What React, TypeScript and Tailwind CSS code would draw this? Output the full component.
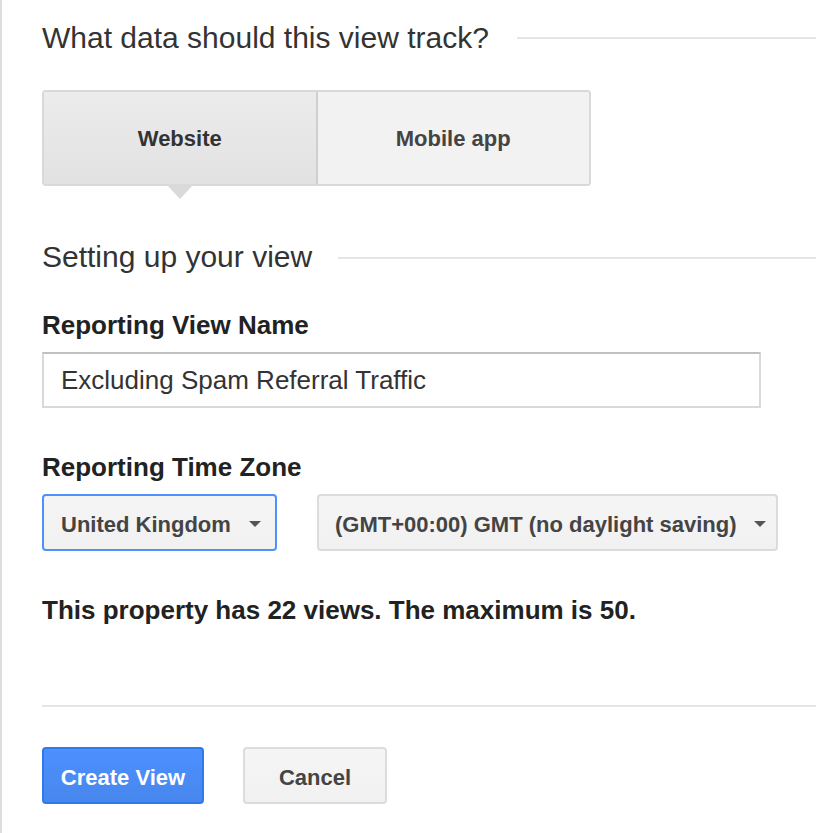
import React from "react";

function Arrow() {
  return (
    <span className="block mt-[3px] w-0 h-0 border-l-[6px] border-r-[6px] border-t-[6px] border-l-transparent border-r-transparent border-t-[#555]" />
  );
}

export default function App() {
  return (
    <div
      className="min-h-screen bg-white border-l-2 border-[#dddddd] pl-[40px] text-[#333]"
      style={{ fontFamily: '"Liberation Sans", Arial, sans-serif' }}
    >
      <div className="pt-[23px] flex flex-col">
        {/* Heading 1 */}
        <div className="flex items-center">
          <h2 className="text-[30px] leading-[30px] font-normal text-[#333] whitespace-nowrap">
            What data should this view track?
          </h2>
          <div className="flex-1 h-[2px] bg-[#e5e5e5] ml-[28px] mt-[0px]" />
        </div>

        {/* Tabs */}
        <div className="mt-[37px] flex w-[549px] h-[96px] rounded-[4px] border-2 border-[#d9d9d9]">
          <div className="relative flex-1 flex items-center justify-center bg-gradient-to-b from-[#ececec] to-[#e2e2e2] border-r-2 border-[#cfcfcf] rounded-l-[2px]">
            <span className="text-[22px] font-bold text-[#333]">Website</span>
            <span className="absolute left-1/2 top-full -translate-x-1/2 w-0 h-0 border-l-[14px] border-r-[14px] border-t-[15px] border-l-transparent border-r-transparent border-t-[#dadada]" />
          </div>
          <div className="flex-1 flex items-center justify-center bg-[#f2f2f2] rounded-r-[2px]">
            <span className="text-[22px] font-bold text-[#444]">Mobile app</span>
          </div>
        </div>

        {/* Heading 2 */}
        <div className="mt-[56px] flex items-center">
          <h2 className="text-[30px] leading-[30px] font-normal text-[#333] whitespace-nowrap">
            Setting up your view
          </h2>
          <div className="flex-1 h-[2px] bg-[#e5e5e5] ml-[26px] mt-[1px]" />
        </div>

        <label className="mt-[40px] text-[26px] leading-[26px] font-bold text-[#222]">
          Reporting View Name
        </label>
        <div className="mt-[14px] w-[719px] h-[56px] border-2 border-[#d9d9d9] border-t-[#c0c0c0] flex items-center pl-[17px] text-[26px] text-[#333]">
          Excluding Spam Referral Traffic
        </div>

        <label className="mt-[46px] text-[26px] leading-[26px] font-bold text-[#222]">
          Reporting Time Zone
        </label>
        <div className="mt-[14px] flex gap-[40px]">
          <div className="w-[235px] h-[57px] rounded-[4px] border-2 border-[#4d90fe] bg-gradient-to-b from-[#f5f5f5] to-[#f1f1f1] flex items-center pl-[17px] gap-[18px]">
            <span className="pt-[4px] text-[22px] font-bold text-[#444] whitespace-nowrap">United Kingdom</span>
            <Arrow />
          </div>
          <div className="w-[461px] h-[57px] rounded-[4px] border-2 border-[#dcdcdc] bg-gradient-to-b from-[#f5f5f5] to-[#f1f1f1] flex items-center pl-[16px] gap-[17px]">
            <span className="pt-[4px] text-[22px] font-bold text-[#444] whitespace-nowrap">
              (GMT+00:00) GMT (no daylight saving)
            </span>
            <Arrow />
          </div>
        </div>

        <p className="mt-[46px] text-[26px] leading-[26px] font-bold text-[#222]">
          This property has 22 views. The maximum is 50.
        </p>

        <div className="mt-[82px] h-[2px] bg-[#e5e5e5]" />

        <div className="mt-[40px] flex gap-[39px] pb-[28px]">
          <button className="w-[162px] h-[57px] pt-[4px] rounded-[4px] border-2 border-[#3079ed] bg-gradient-to-b from-[#4d90fe] to-[#4787ed] text-white text-[22px] font-bold">
            Create View
          </button>
          <button className="w-[144px] h-[57px] pt-[4px] rounded-[4px] border-2 border-[#dcdcdc] bg-gradient-to-b from-[#f5f5f5] to-[#f1f1f1] text-[#444] text-[22px] font-bold">
            Cancel
          </button>
        </div>
      </div>
    </div>
  );
}
